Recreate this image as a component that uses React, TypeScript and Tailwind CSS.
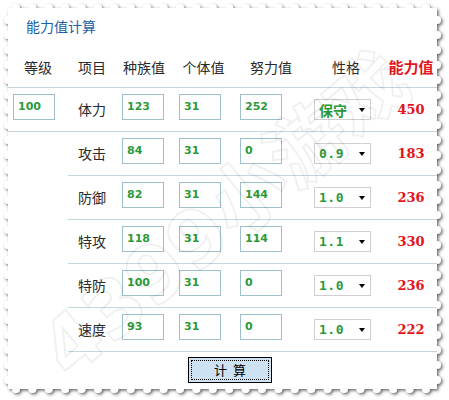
import React from "react";

// rows of the stat table
const stats = [
  { name: "体力", base: "123", iv: "31", ev: "252", nature: "保守", result: "450" },
  { name: "攻击", base: "84", iv: "31", ev: "0", nature: "0.9", result: "183" },
  { name: "防御", base: "82", iv: "31", ev: "144", nature: "1.0", result: "236" },
  { name: "特攻", base: "118", iv: "31", ev: "114", nature: "1.1", result: "330" },
  { name: "特防", base: "100", iv: "31", ev: "0", nature: "1.0", result: "236" },
  { name: "速度", base: "93", iv: "31", ev: "0", nature: "1.0", result: "222" },
];

const cjk = "font-['Noto_Sans_CJK_SC','Noto_Sans',sans-serif]";

function StampFrame() {
  const bumps: { x: number; y: number }[] = [];
  for (let x = 16; x < 437; x += 16.4) {
    bumps.push({ x, y: 8 });
    bumps.push({ x, y: 389 });
  }
  for (let y = 20; y < 389; y += 15) {
    bumps.push({ x: 8, y });
    bumps.push({ x: 437, y });
  }
  return (
    <svg className="absolute inset-0" width="449" height="400" viewBox="0 0 449 400">
      <defs>
        <filter id="stampShadow" x="-5%" y="-5%" width="110%" height="110%">
          <feDropShadow dx="1.5" dy="1.5" stdDeviation="1.6" floodColor="#555" floodOpacity="0.9" />
        </filter>
      </defs>
      <g fill="#fff" filter="url(#stampShadow)">
        <rect x="8" y="8" width="429" height="381" />
        {bumps.map((b, i) => (
          <circle key={i} cx={b.x} cy={b.y} r="4" />
        ))}
      </g>
    </svg>
  );
}

function NumBox({ value }: { value: string }) {
  return (
    <input
      readOnly
      value={value}
      className="w-[42px] h-[26px] mb-[5px] border border-[#9fbfcc] bg-white pl-[4px] pb-[1px] text-[11px] font-bold text-[#2c9a3a] font-['DejaVu_Sans',sans-serif] outline-none"
    />
  );
}

function NatureSelect({ value }: { value: string }) {
  const isText = /[^\d.]/.test(value);
  return (
    <div className="w-[57px] h-[21px] border border-[#cfcfcf] bg-white flex items-center justify-between pl-[4px] pr-[5px]">
      {isText ? (
        <span className={`text-[14px] leading-none font-bold text-[#2c9a3a] ${cjk}`}>{value}</span>
      ) : (
        <span className="text-[13px] leading-none font-bold tracking-[0.5px] text-[#2c9a3a] font-['DejaVu_Sans_Mono',monospace]">
          {value}
        </span>
      )}
      <span className="w-0 h-0 border-l-[3.5px] border-r-[3.5px] border-t-[4px] border-l-transparent border-r-transparent border-t-black" />
    </div>
  );
}

export default function App() {
  return (
    <div className="relative w-[449px] h-[400px] bg-white overflow-hidden">
      <StampFrame />

      <div className="relative pt-[8px] pl-[8px]">
        {/* Title */}
        <div className={`h-[40px] pl-[18px] pt-[10px] text-[14px] leading-[16px] text-[#1b5fa6] ${cjk}`}>
          能力值计算
        </div>

        <div className="w-[429px]">
          {/* Header */}
          <div
            className={`grid grid-cols-[60px_48px_56px_63px_72px_78px_52px] h-[40px] border-b border-[#c6d6de] items-center text-center text-[14px] text-[#2a2a2a] ${cjk}`}
          >
            <div>等级</div>
            <div>项目</div>
            <div>种族值</div>
            <div>个体值</div>
            <div>努力值</div>
            <div>性格</div>
            <div className="text-[15px] font-bold text-[#e3141c]">能力值</div>
          </div>

          {/* Rows */}
          {stats.map((s, i) => (
            <div key={s.name} className="flex">
              <div
                className={`w-[60px] h-[44px] flex items-center pl-[5px] ${i === 0 ? "border-b border-[#c6d6de]" : ""}`}
              >
                {i === 0 && <NumBox value="100" />}
              </div>
              <div className="flex h-[44px] border-b border-[#c6d6de]">
                <div className={`w-[48px] flex items-center justify-center text-[14px] text-[#2a2a2a] ${cjk}`}>
                  {s.name}
                </div>
                <div className="w-[56px] flex items-center pl-[6px]">
                  <NumBox value={s.base} />
                </div>
                <div className="w-[63px] flex items-center pl-[7px]">
                  <NumBox value={s.iv} />
                </div>
                <div className="w-[72px] flex items-center pl-[5px]">
                  <NumBox value={s.ev} />
                </div>
                <div className="w-[78px] flex items-center pl-[7px]">
                  <NatureSelect value={s.nature} />
                </div>
                <div className="w-[52px] flex items-center justify-center text-[13px] font-bold text-[#e3141c] font-['DejaVu_Serif',serif]">
                  {s.result}
                </div>
              </div>
            </div>
          ))}

          {/* Button */}
          <div className="pl-[180px] pt-[5px]">
            <button className="w-[84px] h-[26px] border border-black bg-[#cde2f2] p-[2px]">
              <span className={`flex h-full items-center justify-center border border-dotted border-black text-[13px] text-black ${cjk}`}>
                计&nbsp;&nbsp;算
              </span>
            </button>
          </div>
        </div>
      </div>

      {/* 4399 watermark */}
      <div className="pointer-events-none absolute left-[225px] top-[215px] -translate-x-1/2 -translate-y-1/2 rotate-[-40deg] whitespace-nowrap text-[78px] font-bold leading-none text-transparent [-webkit-text-stroke:2px_rgba(0,0,0,0.06)] font-['DejaVu_Sans','Noto_Sans_CJK_SC',sans-serif]">
        4399小游戏
      </div>
    </div>
  );
}
